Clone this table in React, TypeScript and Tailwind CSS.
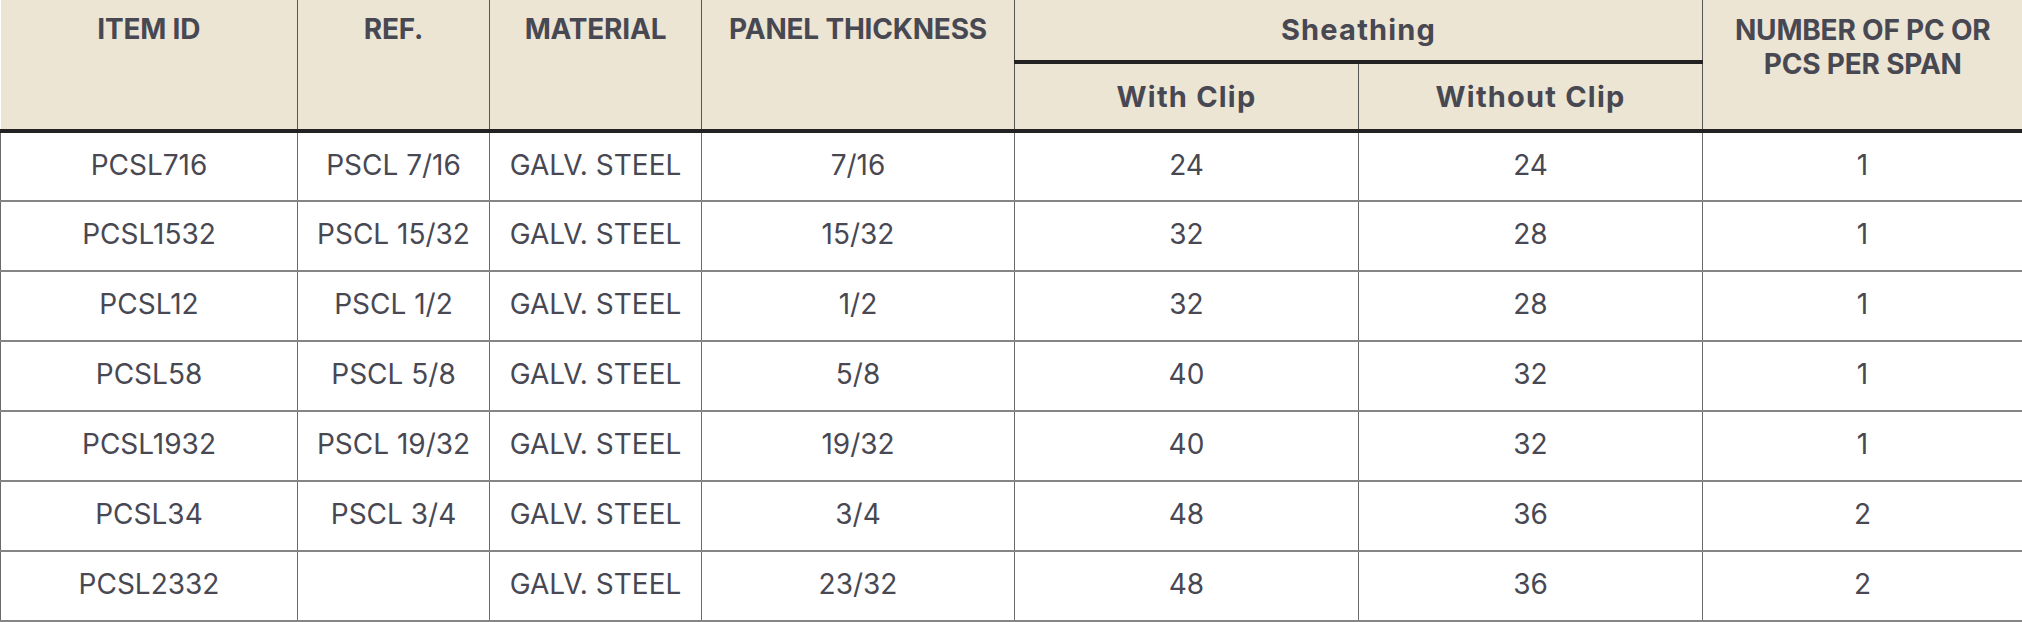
import React from "react";

const rows = [
  ["PCSL716", "PSCL 7/16", "GALV. STEEL", "7/16", "24", "24", "1"],
  ["PCSL1532", "PSCL 15/32", "GALV. STEEL", "15/32", "32", "28", "1"],
  ["PCSL12", "PSCL 1/2", "GALV. STEEL", "1/2", "32", "28", "1"],
  ["PCSL58", "PSCL 5/8", "GALV. STEEL", "5/8", "40", "32", "1"],
  ["PCSL1932", "PSCL 19/32", "GALV. STEEL", "19/32", "40", "32", "1"],
  ["PCSL34", "PSCL 3/4", "GALV. STEEL", "3/4", "48", "36", "2"],
  ["PCSL2332", "", "GALV. STEEL", "23/32", "48", "36", "2"],
];

export default function App() {
  return (
    <div className="w-[2022px] h-[622px] overflow-hidden bg-white font-['Inter','Liberation_Sans',sans-serif] text-[#484853]">
      <table className="w-[2022px] table-fixed border-collapse">
        <colgroup>
          <col className="w-[297px]" />
          <col className="w-[192px]" />
          <col className="w-[212px]" />
          <col className="w-[313px]" />
          <col className="w-[344px]" />
          <col className="w-[344px]" />
          <col className="w-[320px]" />
        </colgroup>
        <thead className="bg-[#ece5d3]">
          <tr className="h-[62px]">
            <th rowSpan={2} className="align-top pt-[13px] border-r border-[#555] border-b-4 border-b-[#222] text-[28px] leading-[33px] font-bold tracking-[-0.2px]">ITEM ID</th>
            <th rowSpan={2} className="align-top pt-[13px] border-x border-[#555] border-b-4 border-b-[#222] text-[28px] leading-[33px] font-bold tracking-[-0.2px]">REF.</th>
            <th rowSpan={2} className="align-top pt-[13px] border-x border-[#555] border-b-4 border-b-[#222] text-[28px] leading-[33px] font-bold tracking-[-0.2px]">MATERIAL</th>
            <th rowSpan={2} className="align-top pt-[13px] border-x border-[#555] border-b-4 border-b-[#222] text-[28px] leading-[33px] font-bold tracking-[-0.2px]">PANEL THICKNESS</th>
            <th colSpan={2} className="align-middle border-x border-[#555] border-b-4 border-b-[#222] text-[29px] leading-[32px] font-bold tracking-[1.2px]">Sheathing</th>
            <th rowSpan={2} className="align-top pt-[13px] px-[16px] border-l border-[#555] border-b-4 border-b-[#222] text-[28px] leading-[34px] font-bold tracking-[-0.2px]">NUMBER OF PC OR PCS PER SPAN</th>
          </tr>
          <tr className="h-[69px]">
            <th className="align-middle border-x border-[#555] border-b-4 border-b-[#222] text-[29px] leading-[32px] font-bold tracking-[1.2px]">With Clip</th>
            <th className="align-middle border-x border-[#555] border-b-4 border-b-[#222] text-[29px] leading-[32px] font-bold tracking-[1.2px]">Without Clip</th>
          </tr>
        </thead>
        <tbody>
          {rows.map((r, i) => (
            <tr key={i} className="h-[70px]">
              {r.map((c, j) => (
                <td
                  key={j}
                  className="align-middle text-center pb-[4px] border-y-2 border-y-[#858585] border-x border-x-[#6a6a6a] text-[28px] leading-[32px] font-normal"
                >
                  {c}
                </td>
              ))}
            </tr>
          ))}
        </tbody>
      </table>
    </div>
  );
}
